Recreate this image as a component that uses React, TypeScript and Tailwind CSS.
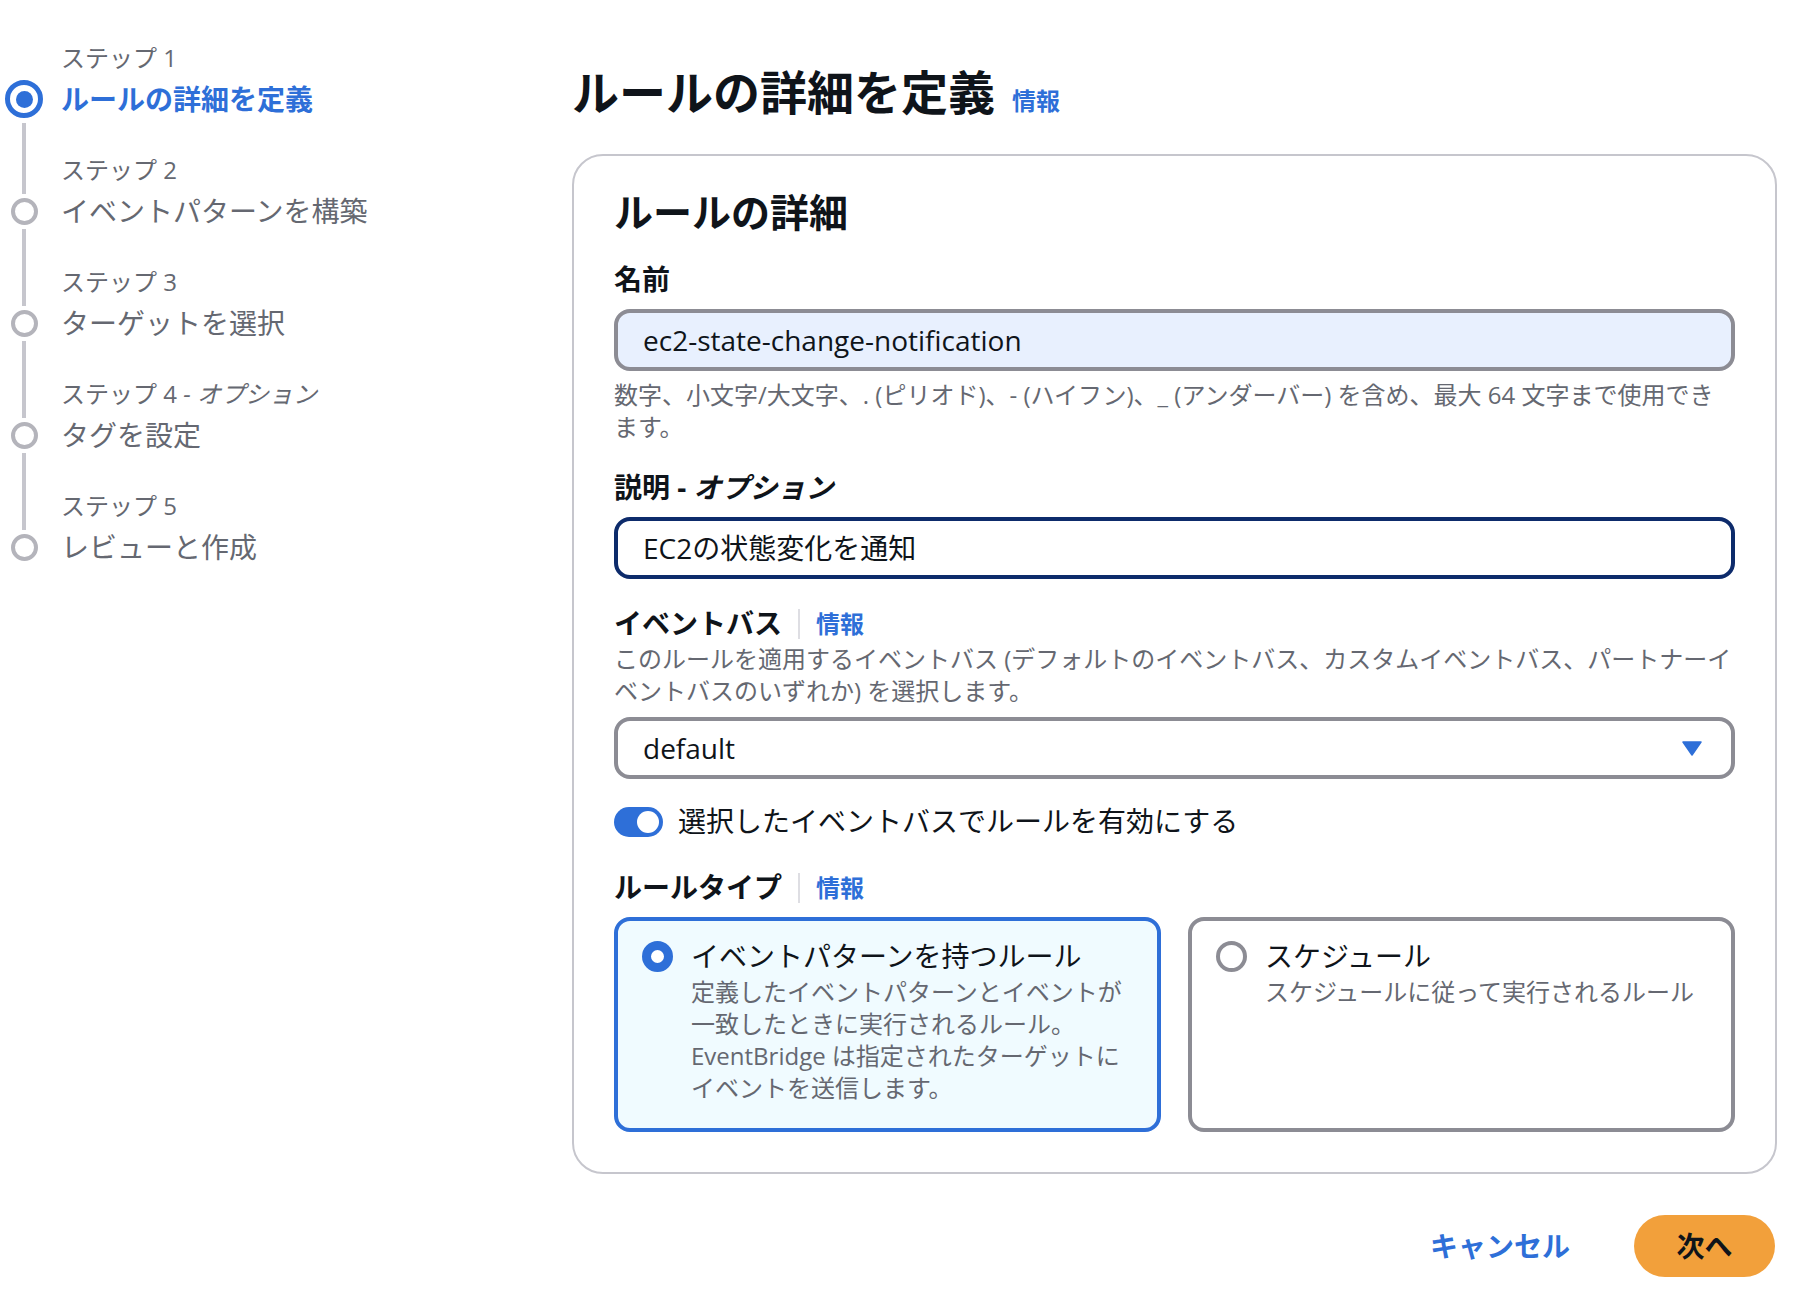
import React from 'react';

const steps = [
  { label: 'ステップ 1', title: 'ルールの詳細を定義', optional: false },
  { label: 'ステップ 2', title: 'イベントパターンを構築', optional: false },
  { label: 'ステップ 3', title: 'ターゲットを選択', optional: false },
  { label: 'ステップ 4', title: 'タグを設定', optional: true },
  { label: 'ステップ 5', title: 'レビューと作成', optional: false },
];

const InfoLink: React.FC = () => (
  <span className="text-[24px] font-bold text-[#2e6fd8]">情報</span>
);

const LabelWithInfo: React.FC<{ text: string }> = ({ text }) => (
  <div className="flex items-center">
    <span className="text-[28px] font-bold leading-[39px]">{text}</span>
    <span className="mx-[16px] h-[30px] w-[2px] bg-[#dedee3]" />
    <InfoLink />
  </div>
);

const Wizard: React.FC = () => (
  <nav className="w-[572px] shrink-0 pt-[42px]">
    {steps.map((s, i) => {
      const active = i === 0;
      const last = i === steps.length - 1;
      return (
        <div key={s.label} className="flex h-[112px]">
          <div className="flex w-[48px] flex-col items-center">
            {active ? (
              <>
                <div className="h-[38px]" />
                <div className="flex size-[38px] items-center justify-center rounded-full border-[5px] border-[#2e6fd8]">
                  <div className="size-[17px] rounded-full bg-[#2e6fd8]" />
                </div>
                <div className="mt-[5px] w-[4px] flex-1 bg-[#c6c6cd]" />
              </>
            ) : (
              <>
                <div className="h-[40px] w-[4px] bg-[#c6c6cd]" />
                <div className="mt-[4px] size-[27px] rounded-full border-[4px] border-[#b4b4bb]" />
                {!last && <div className="mt-[4px] w-[4px] flex-1 bg-[#c6c6cd]" />}
              </>
            )}
          </div>
          <div className="pl-[13px]">
            <div className="text-[24px] leading-[31px] text-[#656871]">
              {s.label}
              {s.optional && <span className="italic"> - オプション</span>}
            </div>
            <div
              className={
                active
                  ? 'mt-[7px] text-[28px] font-bold leading-[39px] text-[#2e6fd8]'
                  : 'mt-[7px] text-[28px] leading-[39px] text-[#656871]'
              }
            >
              {s.title}
            </div>
          </div>
        </div>
      );
    })}
  </nav>
);

const Radio: React.FC<{ checked: boolean }> = ({ checked }) =>
  checked ? (
    <div className="mt-[4px] size-[31px] shrink-0 rounded-full border-[9px] border-[#2e6fd8] bg-white" />
  ) : (
    <div className="mt-[4px] size-[31px] shrink-0 rounded-full border-[4px] border-[#8c8c94] bg-white" />
  );

export default function App() {
  return (
    <div className="flex min-h-screen bg-white font-['Open_Sans','Noto_Sans_CJK_JP',sans-serif] text-[#0f141a]">
      <Wizard />
      <main className="w-[1205px] pt-[63px]">
        <div className="flex items-baseline gap-[17px]">
          <h1 className="text-[47px] font-bold leading-[58px]">ルールの詳細を定義</h1>
          <InfoLink />
        </div>

        <section className="mt-[33px] rounded-[31px] border-2 border-[#c6c6cd] px-[40px] pb-[40px] pt-[33px]">
          <h2 className="text-[39px] font-bold leading-[46px]">ルールの詳細</h2>

          <div className="mt-[25px] text-[28px] font-bold leading-[39px]">名前</div>
          <div className="mt-[10px] flex h-[62px] items-center rounded-[16px] border-4 border-[#8c8c94] bg-[#e8f0fe] px-[25px] text-[28px]">
            ec2-state-change-notification
          </div>
          <p className="mt-[8px] text-[24px] leading-[32px] text-[#656871]">
            数字、小文字/大文字、. (ピリオド)、- (ハイフン)、_ (アンダーバー) を含め、最大 64 文字まで使用できます。
          </p>

          <div className="mt-[25px] text-[28px] font-bold leading-[39px]">
            説明 - <span className="italic">オプション</span>
          </div>
          <div className="mt-[10px] flex h-[62px] items-center rounded-[16px] border-4 border-[#0d2b6b] px-[25px] text-[28px]">
            EC2の状態変化を通知
          </div>

          <div className="mt-[25px]">
            <LabelWithInfo text="イベントバス" />
          </div>
          <p className="text-[24px] leading-[32px] text-[#656871]">
            このルールを適用するイベントバス (デフォルトのイベントバス、カスタムイベントバス、パートナーイベントバスのいずれか) を選択します。
          </p>
          <div className="mt-[10px] flex h-[62px] items-center justify-between rounded-[16px] border-4 border-[#8c8c94] pl-[25px] pr-[29px] text-[28px]">
            <span>default</span>
            <svg width="20" height="15" viewBox="0 0 20 15">
              <path d="M1 1 H19 L10 14 Z" fill="#2e6fd8" stroke="#2e6fd8" strokeWidth="1.5" strokeLinejoin="round" />
            </svg>
          </div>

          <div className="mt-[23px] flex items-center gap-[15px]">
            <div className="flex h-[30px] w-[49px] items-center justify-end rounded-full bg-[#2e6fd8] px-[4px]">
              <div className="size-[22px] rounded-full bg-white" />
            </div>
            <span className="text-[28px] leading-[39px]">選択したイベントバスでルールを有効にする</span>
          </div>

          <div className="mt-[27px]">
            <LabelWithInfo text="ルールタイプ" />
          </div>
          <div className="mt-[10px] grid grid-cols-2 gap-[27px]">
            <div className="flex h-[215px] gap-[18px] rounded-[16px] border-4 border-[#2e6fd8] bg-[#f0fbff] pl-[24px] pr-[20px] pt-[16px]">
              <Radio checked />
              <div>
                <div className="text-[28px] leading-[39px]">イベントパターンを持つルール</div>
                <p className="text-[24px] leading-[32px] text-[#656871]">
                  定義したイベントパターンとイベントが
                  <br />
                  一致したときに実行されるルール。
                  <br />
                  EventBridge は指定されたターゲットに
                  <br />
                  イベントを送信します。
                </p>
              </div>
            </div>
            <div className="flex h-[215px] gap-[18px] rounded-[16px] border-4 border-[#8c8c94] bg-white pl-[24px] pr-[20px] pt-[16px]">
              <Radio checked={false} />
              <div>
                <div className="text-[28px] leading-[39px]">スケジュール</div>
                <p className="text-[24px] leading-[32px] text-[#656871]">スケジュールに従って実行されるルール</p>
              </div>
            </div>
          </div>
        </section>

        <div className="mt-[41px] flex items-center justify-end gap-[64px] pr-[2px]">
          <span className="text-[28px] font-bold text-[#2e6fd8]">キャンセル</span>
          <button className="flex h-[62px] w-[141px] items-center justify-center rounded-full bg-[#f2a03b] text-[28px] font-bold text-[#0f141a]">
            次へ
          </button>
        </div>
      </main>
    </div>
  );
}
